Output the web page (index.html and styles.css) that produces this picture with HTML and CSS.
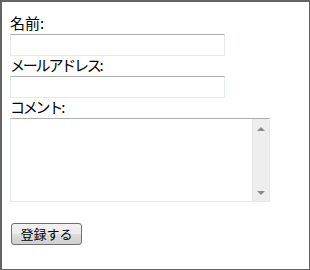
FILE: index.html
```html
<!DOCTYPE html>
<html lang="ja">
<head>
<meta charset="utf-8">
<link rel="stylesheet" href="styles.css">
</head>
<body>
<form class="frame">
  <label class="lbl" for="name">名前:</label>
  <input class="field" id="name" type="text">
  <label class="lbl kana" for="mail">メールアドレス:</label>
  <input class="field" id="mail" type="text">
  <label class="lbl kana" for="comment">コメント:</label>
  <div class="area">
    <textarea class="area-text" id="comment"></textarea>
    <div class="sbar">
      <span class="arrow up"></span>
      <span class="arrow down"></span>
    </div>
  </div>
  <button class="btn" type="button">登録する</button>
</form>
</body>
</html>
```
FILE: styles.css
```css
html, body {
  margin: 0;
  padding: 0;
  background: #fff;
}
.frame {
  box-sizing: border-box;
  width: 310px;
  height: 270px;
  border-style: solid;
  border-color: #646464;
  border-width: 2px 1px 1px 2px;
  padding: 12px 0 0 8px;
  font-family: "Noto Sans CJK JP", "Noto Sans", sans-serif;
  font-size: 15px;
  line-height: 20px;
  color: #000;
}
.lbl {
  display: block;
  height: 20px;
  margin-top: -1px;
  margin-bottom: 1px;
}
.kana {
  letter-spacing: -2.2px;
}
.field {
  display: block;
  box-sizing: border-box;
  width: 215px;
  height: 22px;
  margin: 0;
  padding: 0;
  border: 1px solid #e3e9ef;
  border-top-color: #abadb3;
  outline: none;
  background: #fff;
}
.area {
  display: flex;
  box-sizing: border-box;
  width: 260px;
  height: 84px;
  margin: 0;
  border: 1px solid #e3e9ef;
  border-top-color: #abadb3;
}
.area-text {
  flex: 1;
  border: none;
  outline: none;
  resize: none;
  margin: 0;
  padding: 0;
}
.sbar {
  width: 16px;
  background: #eeeeee;
  border-left: 1px solid #e6e6e6;
  display: flex;
  flex-direction: column;
  justify-content: space-between;
  align-items: center;
  padding: 8px 0 6px;
}
.arrow {
  width: 0;
  height: 0;
  border-left: 4px solid transparent;
  border-right: 4px solid transparent;
}
.arrow.up {
  border-bottom: 4px solid #8a8a8a;
}
.arrow.down {
  border-top: 4px solid #8a8a8a;
}
.btn {
  display: block;
  box-sizing: border-box;
  width: 71px;
  height: 22px;
  margin: 21px 0 0 1px;
  padding: 0;
  border: 1px solid #707070;
  border-radius: 3px;
  background: linear-gradient(#f2f2f2 0%, #ebebeb 50%, #dddddd 51%, #cfcfcf 100%);
  font-family: "Noto Sans CJK JP", "Noto Sans", sans-serif;
  font-size: 13px;
  line-height: 20px;
  color: #000;
}
```
